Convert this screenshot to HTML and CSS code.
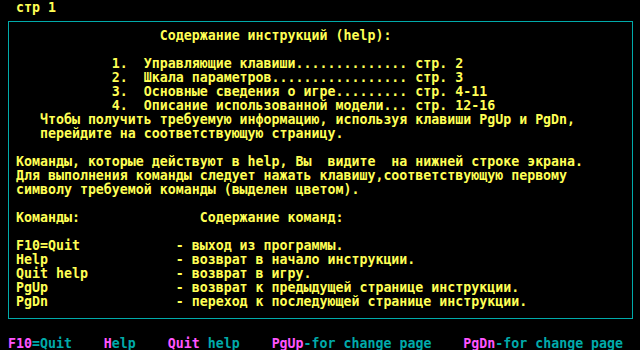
FILE: index.html
```html
<!DOCTYPE html>
<html lang="ru">
<head>
<meta charset="utf-8">
<title>Содержание инструкций</title>
<link rel="stylesheet" href="styles.css">
</head>
<body>
<div class="screen">
<div class="row page y">стр 1</div>
<div class="box y">
<div class="row">                  Содержание инструкций (help):</div>
<div class="row"> </div>
<div class="row">            1.  Управляющие клавиши.............. стр. 2</div>
<div class="row">            2.  Шкала параметров................. стр. 3</div>
<div class="row">            3.  Основные сведения о игре......... стр. 4-11</div>
<div class="row">            4.  Описание использованной модели... стр. 12-16</div>
<div class="row">   Чтобы получить требуемую информацию, используя клавиши PgUp и PgDn,</div>
<div class="row">   перейдите на соответствующую страницу.</div>
<div class="row"> </div>
<div class="row">Команды, которые действуют в help, Вы  видите  на нижней строке экрана.</div>
<div class="row">Для выполнения команды следует нажать клавишу,соответствующую первому</div>
<div class="row">символу требуемой команды (выделен цветом).</div>
<div class="row"> </div>
<div class="row">Команды:               Содержание команд:</div>
<div class="row"> </div>
<div class="row">F10=Quit            - выход из программы.</div>
<div class="row">Help                - возврат в начало инструкции.</div>
<div class="row">Quit help           - возврат в игру.</div>
<div class="row">PgUp                - возврат к предыдущей странице инструкции.</div>
<div class="row">PgDn                - переход к последующей странице инструкции.</div>
</div>
<div class="row status"><span class="m">F10</span><span class="c">=Quit</span>    <span class="m">H</span><span class="c">elp</span>    <span class="m">Quit</span><span class="c"> help</span>    <span class="m">PgUp</span><span class="c">-for change page</span>    <span class="m">PgDn</span><span class="c">-for change page</span></div>
</div>
</body>
</html>
```

FILE: styles.css
```css
html, body {
  margin: 0;
  padding: 0;
  background: #000;
}

.screen {
  width: 640px;
  height: 350px;
  overflow: hidden;
  background: #000;
  font-family: "DejaVu Sans Mono", "Liberation Mono", monospace;
  font-weight: bold;
  font-size: 13.288px;
  line-height: 14px;
}

.row {
  height: 13px;
  padding-top: 1px;
  white-space: pre;
}

.y { color: #ffff55; }
.m { color: #ff55ff; }
.c { color: #00aaaa; }

.page {
  padding-left: 16px;
}

.box {
  box-sizing: border-box;
  width: 625px;
  margin: 7px 0 0 8px;
  border: 1px solid #00aaaa;
  padding: 6px 0 10px 7px;
}

.status {
  margin-top: 17px;
  padding-left: 8px;
}
```
